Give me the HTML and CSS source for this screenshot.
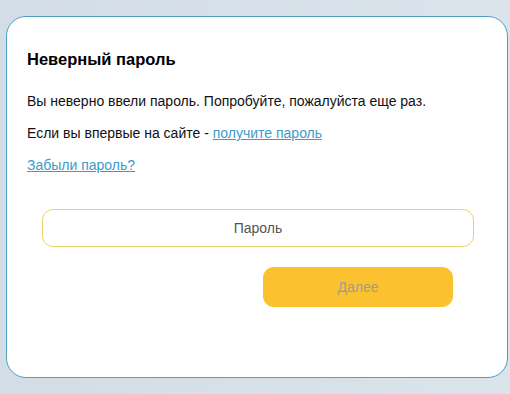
FILE: index.html
```html
<!DOCTYPE html>
<html lang="ru">
<head>
    <meta charset="UTF-8">
    <meta name="viewport" content="width=device-width, initial-scale=1.0">
    <title>Неверный пароль</title>
    <link rel="stylesheet" href="styles.css">
</head>
<body>
    <div class="modal">
        <h2 class="modalTitle">Неверный пароль</h2>
        <p class="modalText">Вы неверно ввели пароль. Попробуйте, пожалуйста еще раз.</p>
        <p class="modalText">Если вы впервые на сайте - <a href="#" class="link">получите пароль</a></p>
        <p class="modalText"><a href="#" class="link">Забыли пароль?</a></p>
        <form class="passForm">
            <input type="password" class="passInput" placeholder="Пароль">
            <div class="formActions">
                <button type="submit" class="nextButton" disabled>Далее</button>
            </div>
        </form>
    </div>
</body>
</html>
```

FILE: styles.css
```css
* {
    margin: 0;
    padding: 0;
    box-sizing: border-box;
}

body {
    font-family: 'Liberation Sans', Arial, sans-serif;
    background: linear-gradient(90deg, #d3dde6, #dbe4eb);
    color: #111;
    height: 100vh;
    overflow: hidden;
    padding: 16px 2px 0 6px;
}

.modal {
    background: #fff;
    border: 1px solid #4f9fc2;
    border-radius: 20px;
    width: 502px;
    height: 362px;
    padding: 33px 33px 0 20px;
}

.modalTitle {
    font-size: 16.5px;
    font-weight: bold;
    line-height: 18px;
    color: #000;
    margin-bottom: 25px;
}

.modalText {
    font-size: 14px;
    line-height: 16px;
    margin-bottom: 16px;
}

.link {
    color: #3d9bc6;
    text-decoration: underline;
}

.passForm {
    padding-top: 20px;
    padding-left: 15px;
}

.passInput {
    display: block;
    width: 432px;
    height: 38px;
    border: 1px solid #ecd36a;
    border-radius: 11px;
    font-family: inherit;
    font-size: 14px;
    text-align: center;
    color: #555;
    outline: none;
}

.passInput::placeholder {
    color: #555;
    opacity: 1;
}

.formActions {
    display: flex;
    justify-content: flex-end;
    padding-right: 21px;
    margin-top: 20px;
}

.nextButton {
    width: 190px;
    height: 40px;
    border: none;
    border-radius: 11px;
    background: #fcc12e;
    color: #a59e88;
    font-family: inherit;
    font-size: 14px;
}
```
